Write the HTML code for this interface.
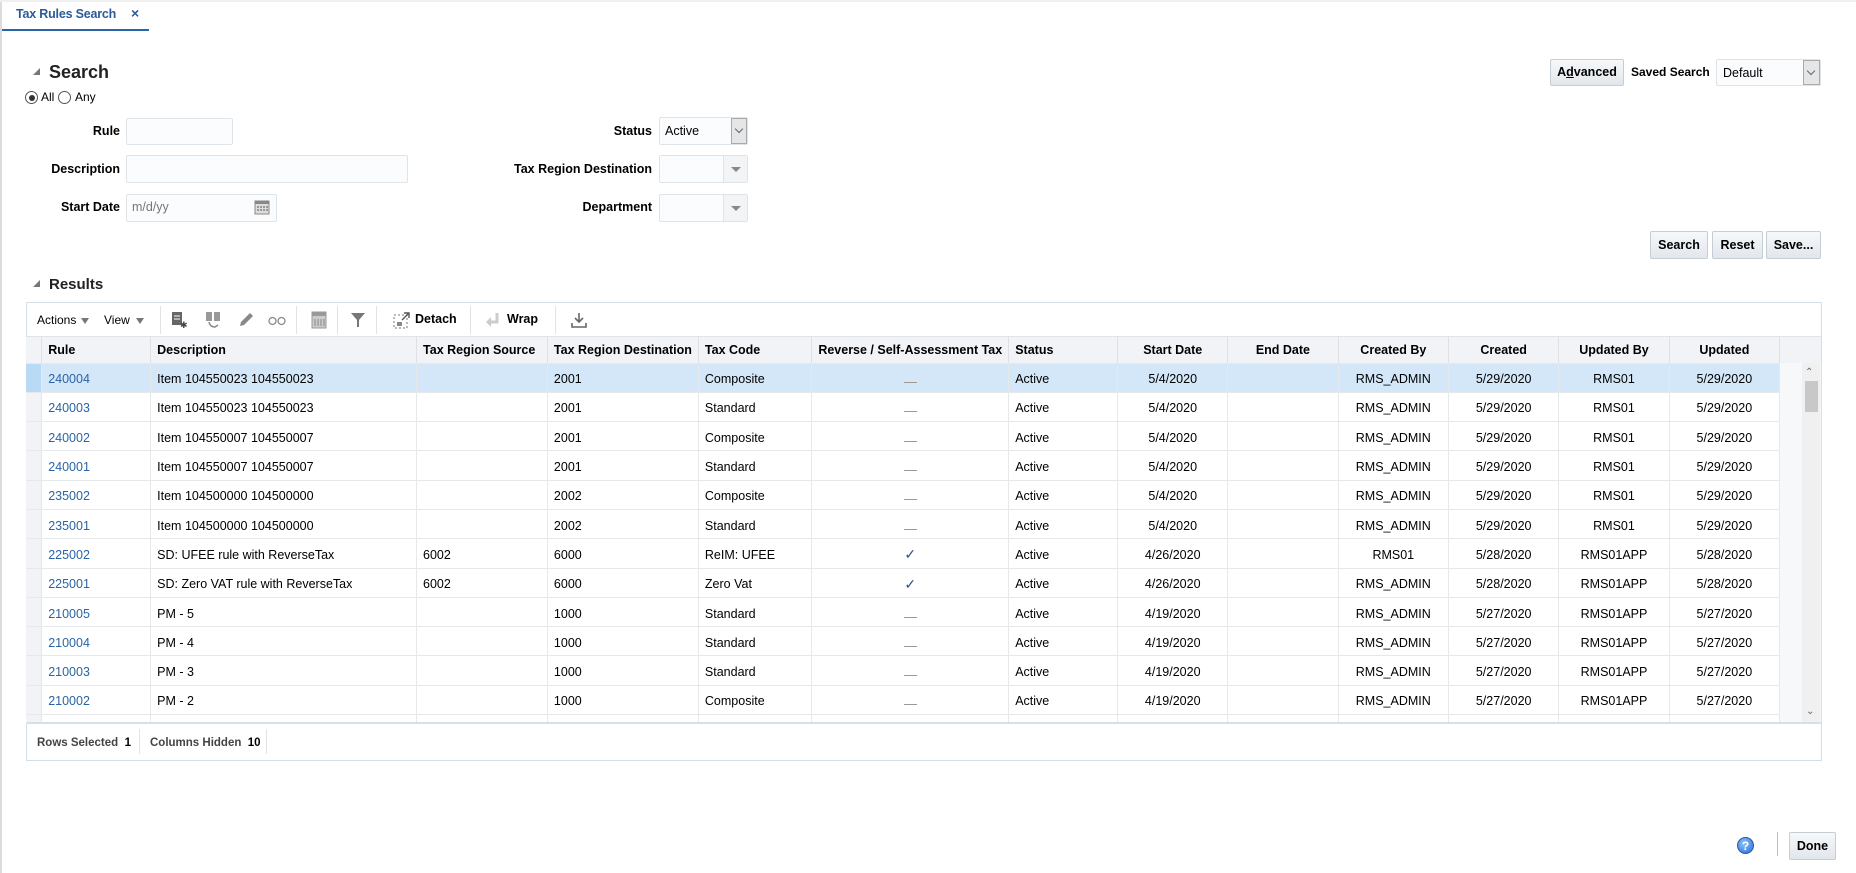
<!DOCTYPE html>
<html><head><meta charset="utf-8">
<style>
*{box-sizing:border-box;margin:0;padding:0}
body{width:1856px;height:873px;background:#fff;font-family:"Liberation Sans",Arial,sans-serif;color:#000;position:relative;overflow:hidden;font-size:12.5px}
.a{position:absolute;white-space:nowrap}
.lbl{font-weight:bold;text-align:right;width:140px}
.inp{position:absolute;border:1px solid #dfe4e8;background:#fbfcfd;border-radius:2px}
.btn{position:absolute;border:1px solid #c4ced7;border-radius:2px;background:linear-gradient(#f6f8fa,#e2e7ec);font-weight:bold;font-size:12.5px;text-align:center;color:#000}
.sel{position:absolute;border:1px solid #dfe4e8;background:#fbfcfd;border-radius:2px}
.sel .ar{position:absolute;right:0;top:0;bottom:0;width:24px;border-left:1px solid #dfe4e8;background:#f2f4f6}
.sel .ar:after{content:"";position:absolute;left:7px;top:11px;border:5px solid transparent;border-top:5px solid #888}
.sel .ar.cv:after{content:"";left:4px;top:7px;width:5px;height:5px;border:none;border-right:1px solid #666;border-bottom:1px solid #666;transform:rotate(45deg)}
.vs{position:absolute;width:1px;background:#dfe4e8}
table{border-collapse:collapse;table-layout:fixed;position:absolute;left:26px;top:337px}
td,th{border-right:1px solid #e6e9ec;border-bottom:1px solid #e6e9ec;white-space:nowrap;overflow:hidden;padding:0 6px;font-size:12.5px}
th{height:26px;background:#f1f3f6;text-align:left;font-weight:bold;border-right:1px solid #dde1e5}
td{height:29.3px;padding-top:3px}
td.c,th.c{text-align:center}
td.s,th.s{background:#f1f3f6;padding:0}
tr.hl td{background:#d4e7f8}
tr.hl td.s{background:#b9daf4}
a{color:#2a64a8;text-decoration:none}
.dash{display:inline-block;width:13px;border-bottom:1px solid #999;margin-top:10px}
.chk{color:#2f4e8a;font-size:14px}
</style></head><body>
<div class="a" style="left:0;top:0;width:2px;height:873px;background:#dcdcdc"></div>
<div class="a" style="left:0;top:0;width:1856px;height:2px;background:#f0f0f0"></div>
<div class="a" style="left:16px;top:7px;font-weight:bold;font-size:12.5px;letter-spacing:-0.2px;color:#2a5b96">Tax Rules Search</div>
<div class="a" style="left:131px;top:5px;font-weight:bold;font-size:14px;color:#2a5b96">×</div>
<div class="a" style="left:2px;top:29px;width:147px;height:2px;background:#2a65a8"></div>

<div class="a" style="left:33px;top:68px;border-left:7px solid transparent;border-bottom:7px solid #777"></div>
<div class="a" style="left:49px;top:62px;font-size:18px;font-weight:bold;color:#222">Search</div>
<div class="a" style="left:25px;top:91px;width:13px;height:13px;border:1px solid #555;border-radius:50%"></div>
<div class="a" style="left:28.5px;top:94.5px;width:6px;height:6px;background:#333;border-radius:50%"></div>
<div class="a" style="left:41px;top:90px;font-size:12px">All</div>
<div class="a" style="left:58px;top:91px;width:13px;height:13px;border:1px solid #555;border-radius:50%"></div>
<div class="a" style="left:75px;top:90px;font-size:12px">Any</div>

<div class="a lbl" style="left:-20px;top:124px">Rule</div>
<div class="inp" style="left:126px;top:118px;width:107px;height:27px"></div>
<div class="a lbl" style="left:-20px;top:162px">Description</div>
<div class="inp" style="left:126px;top:155px;width:282px;height:28px"></div>
<div class="a lbl" style="left:-20px;top:200px">Start Date</div>
<div class="inp" style="left:126px;top:194px;width:151px;height:28px"></div>
<div class="a" style="left:132px;top:200px;color:#777">m/d/yy</div>
<svg class="a" style="left:254px;top:199px" width="16" height="16" viewBox="0 0 16 16"><rect x="1" y="2" width="14" height="13" fill="#ddd" stroke="#888"/><rect x="1" y="2" width="14" height="3" fill="#888"/><g fill="#999"><rect x="3" y="7" width="2" height="2"/><rect x="6" y="7" width="2" height="2"/><rect x="9" y="7" width="2" height="2"/><rect x="12" y="7" width="2" height="2"/><rect x="3" y="10" width="2" height="2"/><rect x="6" y="10" width="2" height="2"/><rect x="9" y="10" width="2" height="2"/><rect x="12" y="10" width="2" height="2"/></g></svg>

<div class="a lbl" style="left:512px;top:124px">Status</div>
<div class="sel" style="left:659px;top:117px;width:89px;height:28px"><div class="a" style="left:5px;top:6px">Active</div><div class="ar cv" style="width:16px;background:#e4e6e8;border:1px solid #aaa"></div></div>
<div class="a lbl" style="left:412px;top:162px;width:240px">Tax Region Destination</div>
<div class="sel" style="left:659px;top:155px;width:89px;height:28px"><div class="ar"></div></div>
<div class="a lbl" style="left:512px;top:200px">Department</div>
<div class="sel" style="left:659px;top:194px;width:89px;height:28px"><div class="ar"></div></div>

<div class="btn" style="left:1550px;top:59px;width:74px;height:27px;line-height:25px">A<u>d</u>vanced</div>
<div class="a" style="left:1631px;top:65px;font-weight:bold;font-size:12px">Saved Search</div>
<div class="sel" style="left:1716px;top:59px;width:105px;height:27px"><div class="a" style="left:6px;top:6px">Default</div><div class="ar cv" style="width:17px;background:#e4e6e8;border:1px solid #aaa"></div></div>

<div class="btn" style="left:1650px;top:231px;width:58px;height:28px;line-height:26px">Search</div>
<div class="btn" style="left:1712px;top:231px;width:51px;height:28px;line-height:26px">Reset</div>
<div class="btn" style="left:1766px;top:231px;width:55px;height:28px;line-height:26px">Save...</div>

<div class="a" style="left:33px;top:280px;border-left:7px solid transparent;border-bottom:7px solid #777"></div>
<div class="a" style="left:49px;top:276px;font-size:15px;font-weight:bold;color:#222">Results</div>

<div class="a" style="left:26px;top:302px;width:1796px;height:459px;border:1px solid #d6dfe6"></div>
<div class="a" style="left:37px;top:313px;font-size:12px">Actions</div>
<div class="a" style="left:81px;top:318px;border:4px solid transparent;border-top:6px solid #777"></div>
<div class="a" style="left:104px;top:313px;font-size:12px">View</div>
<div class="a" style="left:136px;top:318px;border:4px solid transparent;border-top:6px solid #777"></div>
<div class="vs" style="left:160px;top:306px;height:28px"></div>
<svg class="a" style="left:171px;top:311px" width="16" height="18"><rect x="1" y="1" width="10" height="13" fill="#666"/><g stroke="#fff"><line x1="3" y1="5" x2="9" y2="5"/><line x1="3" y1="8" x2="9" y2="8"/></g><text x="9" y="17" font-size="9" fill="#444">✱</text></svg>
<svg class="a" style="left:205px;top:311px" width="18" height="18"><rect x="1" y="1" width="6" height="9" fill="#999"/><rect x="9" y="1" width="6" height="9" fill="#999"/><path d="M4 11 q1 5 6 5 l3 -2" fill="none" stroke="#888" stroke-width="1.5"/></svg>
<svg class="a" style="left:238px;top:312px" width="16" height="16"><path d="M2 14 L3 10 L12 1 L15 4 L6 13 Z" fill="#888"/></svg>
<svg class="a" style="left:268px;top:316px" width="18" height="10"><circle cx="4.5" cy="5" r="3.5" fill="none" stroke="#888" stroke-width="1.3"/><circle cx="13.5" cy="5" r="3.5" fill="none" stroke="#888" stroke-width="1.3"/></svg>
<div class="vs" style="left:296px;top:306px;height:28px"></div>
<svg class="a" style="left:311px;top:311px" width="16" height="18"><rect x="1" y="1" width="14" height="16" fill="#ccc" stroke="#999"/><rect x="1" y="1" width="14" height="4" fill="#999"/><g stroke="#888"><line x1="4" y1="8" x2="4" y2="15"/><line x1="7" y1="8" x2="7" y2="15"/><line x1="10" y1="8" x2="10" y2="15"/><line x1="13" y1="8" x2="13" y2="15"/></g></svg>
<div class="vs" style="left:337px;top:306px;height:28px"></div>
<svg class="a" style="left:350px;top:312px" width="16" height="16"><path d="M1 1 H15 L9 8 V15 L7 15 V8 Z" fill="#777"/></svg>
<div class="vs" style="left:376px;top:306px;height:28px"></div>
<svg class="a" style="left:393px;top:311px" width="18" height="18"><rect x="1" y="4" width="13" height="13" fill="none" stroke="#777" stroke-dasharray="2,2"/><path d="M9 9 L16 2 M11 2 H16 V7" fill="none" stroke="#555" stroke-width="1.4"/><rect x="4" y="11" width="5" height="4" fill="#888"/></svg>
<div class="a" style="left:415px;top:312px;font-weight:bold;font-size:12.5px">Detach</div>
<div class="vs" style="left:470px;top:306px;height:28px"></div>
<svg class="a" style="left:485px;top:312px" width="16" height="16"><path d="M12 1 V10 H5" fill="none" stroke="#ccc" stroke-width="3"/><path d="M1 10 L6 5 V15 Z" fill="#ccc"/></svg>
<div class="a" style="left:507px;top:312px;font-weight:bold;font-size:12.5px">Wrap</div>
<div class="vs" style="left:555px;top:306px;height:28px"></div>
<svg class="a" style="left:571px;top:312px" width="16" height="16"><path d="M8 1 V10 M4 6 L8 10 L12 6" fill="none" stroke="#666" stroke-width="1.6"/><path d="M1 11 V15 H15 V11" fill="none" stroke="#666" stroke-width="1.6"/></svg>
<div class="a" style="left:27px;top:336px;width:1794px;height:1px;background:#dfe4e8"></div>

<div class="a" style="left:1780px;top:337px;width:41px;height:26px;background:#f1f3f6"></div>
<div class="a" style="left:1780px;top:363px;width:41px;height:360px;background:#f7f8fa"></div>
<div class="a" style="left:1802px;top:363px;width:18px;height:360px;background:#f0f0f0"></div>
<div class="a" style="left:1805px;top:367px;font-size:10px;color:#666">⌃</div>
<div class="a" style="left:1805px;top:381px;width:13px;height:31px;background:#c8c8c8"></div>
<div class="a" style="left:1806px;top:706px;font-size:10px;color:#666">⌄</div>

<div class="a" style="left:26px;top:337px;width:1754px;height:386px;overflow:hidden">
<table style="left:0;top:0">
<colgroup><col style="width:16px"><col style="width:110px"><col style="width:267px"><col style="width:131px"><col style="width:150px"><col style="width:114px"><col style="width:189px"><col style="width:110px"><col style="width:111px"><col style="width:111px"><col style="width:111px"><col style="width:111px"><col style="width:111px"><col style="width:111px"></colgroup>
<tr><th class="s"></th><th>Rule</th><th>Description</th><th>Tax Region Source</th><th>Tax Region Destination</th><th>Tax Code</th><th>Reverse / Self-Assessment Tax</th><th>Status</th><th class="c">Start Date</th><th class="c">End Date</th><th class="c">Created By</th><th class="c">Created</th><th class="c">Updated By</th><th class="c">Updated</th></tr>
<tr class="hl"><td class="s"></td><td><a>240004</a></td><td>Item 104550023 104550023</td><td></td><td>2001</td><td>Composite</td><td class="c"><span class="dash"></span></td><td>Active</td><td class="c">5/4/2020</td><td></td><td class="c">RMS_ADMIN</td><td class="c">5/29/2020</td><td class="c">RMS01</td><td class="c">5/29/2020</td></tr>
<tr><td class="s"></td><td><a>240003</a></td><td>Item 104550023 104550023</td><td></td><td>2001</td><td>Standard</td><td class="c"><span class="dash"></span></td><td>Active</td><td class="c">5/4/2020</td><td></td><td class="c">RMS_ADMIN</td><td class="c">5/29/2020</td><td class="c">RMS01</td><td class="c">5/29/2020</td></tr>
<tr><td class="s"></td><td><a>240002</a></td><td>Item 104550007 104550007</td><td></td><td>2001</td><td>Composite</td><td class="c"><span class="dash"></span></td><td>Active</td><td class="c">5/4/2020</td><td></td><td class="c">RMS_ADMIN</td><td class="c">5/29/2020</td><td class="c">RMS01</td><td class="c">5/29/2020</td></tr>
<tr><td class="s"></td><td><a>240001</a></td><td>Item 104550007 104550007</td><td></td><td>2001</td><td>Standard</td><td class="c"><span class="dash"></span></td><td>Active</td><td class="c">5/4/2020</td><td></td><td class="c">RMS_ADMIN</td><td class="c">5/29/2020</td><td class="c">RMS01</td><td class="c">5/29/2020</td></tr>
<tr><td class="s"></td><td><a>235002</a></td><td>Item 104500000 104500000</td><td></td><td>2002</td><td>Composite</td><td class="c"><span class="dash"></span></td><td>Active</td><td class="c">5/4/2020</td><td></td><td class="c">RMS_ADMIN</td><td class="c">5/29/2020</td><td class="c">RMS01</td><td class="c">5/29/2020</td></tr>
<tr><td class="s"></td><td><a>235001</a></td><td>Item 104500000 104500000</td><td></td><td>2002</td><td>Standard</td><td class="c"><span class="dash"></span></td><td>Active</td><td class="c">5/4/2020</td><td></td><td class="c">RMS_ADMIN</td><td class="c">5/29/2020</td><td class="c">RMS01</td><td class="c">5/29/2020</td></tr>
<tr><td class="s"></td><td><a>225002</a></td><td>SD: UFEE rule with ReverseTax</td><td>6002</td><td>6000</td><td>ReIM: UFEE</td><td class="c"><span class="chk">✓</span></td><td>Active</td><td class="c">4/26/2020</td><td></td><td class="c">RMS01</td><td class="c">5/28/2020</td><td class="c">RMS01APP</td><td class="c">5/28/2020</td></tr>
<tr><td class="s"></td><td><a>225001</a></td><td>SD: Zero VAT rule with ReverseTax</td><td>6002</td><td>6000</td><td>Zero Vat</td><td class="c"><span class="chk">✓</span></td><td>Active</td><td class="c">4/26/2020</td><td></td><td class="c">RMS_ADMIN</td><td class="c">5/28/2020</td><td class="c">RMS01APP</td><td class="c">5/28/2020</td></tr>
<tr><td class="s"></td><td><a>210005</a></td><td>PM - 5</td><td></td><td>1000</td><td>Standard</td><td class="c"><span class="dash"></span></td><td>Active</td><td class="c">4/19/2020</td><td></td><td class="c">RMS_ADMIN</td><td class="c">5/27/2020</td><td class="c">RMS01APP</td><td class="c">5/27/2020</td></tr>
<tr><td class="s"></td><td><a>210004</a></td><td>PM - 4</td><td></td><td>1000</td><td>Standard</td><td class="c"><span class="dash"></span></td><td>Active</td><td class="c">4/19/2020</td><td></td><td class="c">RMS_ADMIN</td><td class="c">5/27/2020</td><td class="c">RMS01APP</td><td class="c">5/27/2020</td></tr>
<tr><td class="s"></td><td><a>210003</a></td><td>PM - 3</td><td></td><td>1000</td><td>Standard</td><td class="c"><span class="dash"></span></td><td>Active</td><td class="c">4/19/2020</td><td></td><td class="c">RMS_ADMIN</td><td class="c">5/27/2020</td><td class="c">RMS01APP</td><td class="c">5/27/2020</td></tr>
<tr><td class="s"></td><td><a>210002</a></td><td>PM - 2</td><td></td><td>1000</td><td>Composite</td><td class="c"><span class="dash"></span></td><td>Active</td><td class="c">4/19/2020</td><td></td><td class="c">RMS_ADMIN</td><td class="c">5/27/2020</td><td class="c">RMS01APP</td><td class="c">5/27/2020</td></tr>
<tr><td class="s"></td><td></td><td></td><td></td><td></td><td></td><td></td><td></td><td></td><td></td><td></td><td></td><td></td><td></td></tr>
</table></div>
<div class="a" style="left:27px;top:722px;width:1794px;height:2px;background:#d6dfe6"></div>
<div class="a" style="left:37px;top:737px;color:#444;font-weight:bold;font-size:11.5px">Rows Selected&nbsp; <span style="color:#000">1</span></div>
<div class="vs" style="left:139px;top:729px;height:25px"></div>
<div class="a" style="left:150px;top:737px;color:#444;font-weight:bold;font-size:11.5px">Columns Hidden&nbsp; <span style="color:#000">10</span></div>
<div class="vs" style="left:266px;top:729px;height:25px"></div>

<div class="a" style="left:1737px;top:837px;width:17px;height:17px;border-radius:50%;background:radial-gradient(circle at 40% 35%,#8cc4ff,#2a6ad0);color:#fff;font-weight:bold;font-size:12px;text-align:center;line-height:17px;border:1px solid #2a5aa8">?</div>
<div class="vs" style="left:1777px;top:832px;height:24px;background:#b8c0c8"></div>
<div class="btn" style="left:1789px;top:832px;width:47px;height:28px;line-height:26px">Done</div>
</body></html>
